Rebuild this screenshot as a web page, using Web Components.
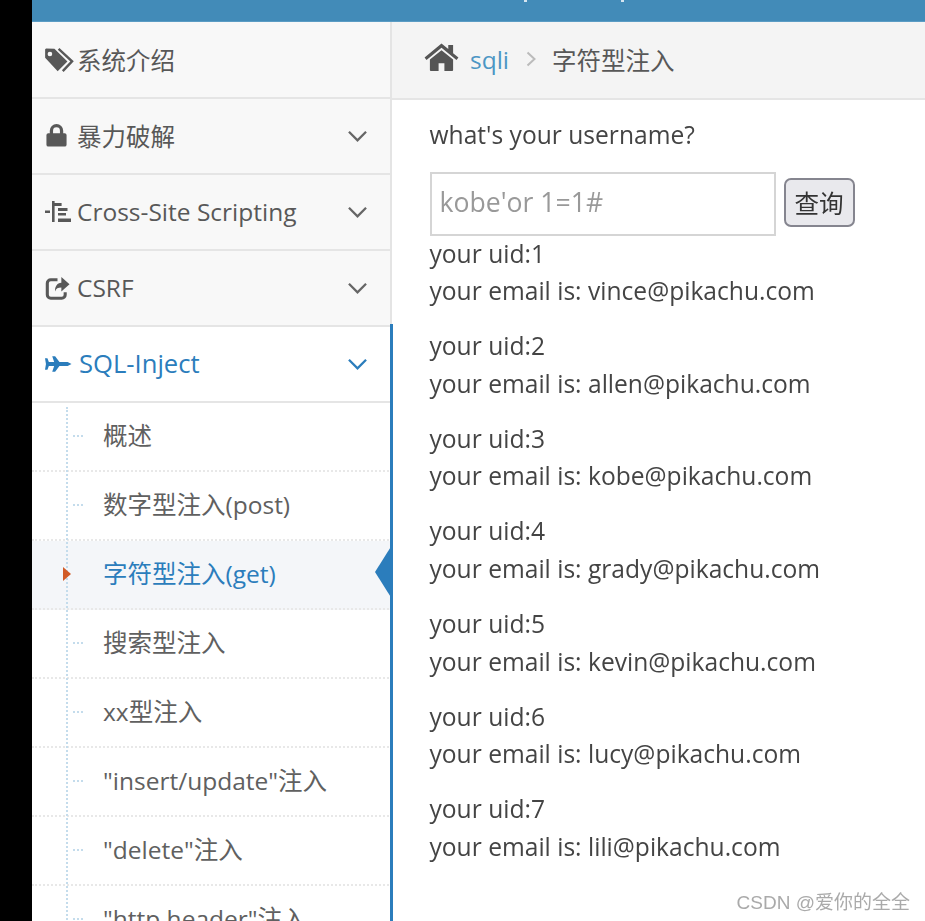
<!DOCTYPE html>
<html>
<head>
<meta charset="utf-8">
<style>
  html, body { margin: 0; height: 100%; overflow: hidden; background: #fff; }
  body { font-family: "Open Sans", "Noto Sans CJK SC", sans-serif; color: #555; }
</style>
</head>
<body>
<pk-app>
  <pk-topbar slot="top"></pk-topbar>
  <pk-sidebar slot="side">
    <pk-nav-item label="系统介绍" icon="tag" first></pk-nav-item>
    <pk-nav-item label="暴力破解" icon="lock" caret></pk-nav-item>
    <pk-nav-item label="Cross-Site Scripting" icon="xss" caret></pk-nav-item>
    <pk-nav-item label="CSRF" icon="share" caret></pk-nav-item>
    <pk-nav-item label="SQL-Inject" icon="plane" caret open></pk-nav-item>
    <pk-sub-list>
      <pk-sub-item>概述</pk-sub-item>
      <pk-sub-item>数字型注入(post)</pk-sub-item>
      <pk-sub-item active>字符型注入(get)</pk-sub-item>
      <pk-sub-item>搜索型注入</pk-sub-item>
      <pk-sub-item>xx型注入</pk-sub-item>
      <pk-sub-item>"insert/update"注入</pk-sub-item>
      <pk-sub-item>"delete"注入</pk-sub-item>
      <pk-sub-item>"http header"注入</pk-sub-item>
    </pk-sub-list>
  </pk-sidebar>
  <pk-breadcrumb slot="crumb"></pk-breadcrumb>
  <pk-query slot="main"></pk-query>
</pk-app>
<script>
// icons, filled with currentColor
const ICONS = {
  tag: '<svg viewBox="0 0 34 28" width="32" height="26" style="margin-left:-1px"><path fill="currentColor" d="M1 2.500 1 11.500 14.500 26 25 15.500 11 2 2 1.600ZM6.200 5a2.500 2.500 0 1 1-.1 5 2.500 2.500 0 0 1 .1-5Z"/><path fill="none" stroke="currentColor" stroke-width="2.600" d="M15.500 2 30 15.500 20 26"/></svg>',
  lock: '<svg viewBox="0 0 24 26" width="23" height="26"><path fill="currentColor" d="M5 10V7.500a7 7 0 0 1 14 0V10h1.500a2 2 0 0 1 2 2v10a2 2 0 0 1-2 2h-17a2 2 0 0 1-2-2V12a2 2 0 0 1 2-2ZM8.400 10h7.200V7.500a3.600 3.600 0 0 0-7.200 0Z"/></svg>',
  xss: '<svg viewBox="0 0 28 24" width="28" height="24"><path fill="currentColor" d="M0 10.500h5v2.500H0ZM7 1h2.600v21H7ZM9.600 3h7v3h-7ZM13 8h9.500v3H13ZM13 13h8v2.600h-8ZM13 18.500h13V22H13Z"/></svg>',
  share: '<svg viewBox="0 0 26 26" width="25" height="25"><path fill="none" stroke="currentColor" stroke-width="3.200" d="M21 17v2.500a3.600 3.600 0 0 1-3.600 3.600H6a3.600 3.600 0 0 1-3.600-3.600V7.500A3.600 3.600 0 0 1 6 3.900h7"/><path fill="currentColor" d="M17 1l8.500 7.500L17 16v-4c-3.500 0-5.500 1-6.500 4-.4-5 2-8.700 6.500-9Z"/></svg>',
  plane: '<svg viewBox="0 0 28 20" width="27" height="20"><path fill="currentColor" d="M0 4h2.500l1.500 4h5.500L7.500 2h3L15 8h8.500l4 2-4 2H15l-4.500 6h-3l2-6H4l-1.500 4H0l1-6Z"/></svg>',
  home: '<svg viewBox="0 0 36 30" width="35" height="29"><path fill="currentColor" d="M18 7.500 6 17v11a1 1 0 0 0 1 1h8v-8h6v8h8a1 1 0 0 0 1-1V17Z"/><path fill="currentColor" d="M18 .5.500 15l2 2.500L18 4.800l15.500 12.700 2-2.500L30 10.500V2h-5v4.300Z"/></svg>',
  down: '<svg viewBox="0 0 20 12" width="19" height="12"><path fill="none" stroke="currentColor" stroke-width="2.400" d="M1 1.500 10 10.500 19 1.500"/></svg>'
};

class PkApp extends HTMLElement {
  constructor() {
    super();
    this.attachShadow({ mode: 'open' }).innerHTML = `
      <style>
        :host { display: grid; grid-template-columns: 32px 360px 1fr; grid-template-rows: 22px 78px 1fr; height: 921px; overflow: hidden; filter: blur(.45px); }
        .black { background: #000; grid-row: 1 / 4; }
        ::slotted([slot=top]) { grid-column: 2 / 4; }
        ::slotted([slot=side]) { grid-row: 2 / 4; }
      </style>
      <div class="black"></div>
      <slot name="top"></slot>
      <slot name="side"></slot>
      <slot name="crumb"></slot>
      <slot name="main"></slot>`;
  }
}

class PkTopbar extends HTMLElement {
  constructor() {
    super();
    this.attachShadow({ mode: 'open' }).innerHTML = `
      <style>
        :host { display: block; background: #428bb8; border-bottom: 1px solid #5b9cc4; box-sizing: border-box; overflow: hidden; position: relative; }
        /* the tips of the cut off title */
        i { position: absolute; top: 0; width: 3px; height: 2px; background: #d5e5f0; }
      </style>
      <i style="left:492px"></i><i style="left:589px"></i>`;
  }
}

class PkSidebar extends HTMLElement {
  constructor() {
    super();
    this.attachShadow({ mode: 'open' }).innerHTML = `
      <style>
        :host { display: block; background: #f8f8f8; position: relative; z-index: 1; }
        .rail { position: absolute; right: 0; top: 0; bottom: 0; width: 2px; background: #e4e4e4; z-index: 2; }
        .rail.on { top: 302px; width: 3px; right: -1px; background: #2b7dbc; }
      </style>
      <slot></slot>
      <div class="rail"></div>
      <div class="rail on"></div>`;
  }
}

class PkNavItem extends HTMLElement {
  constructor() {
    super();
    const open = this.hasAttribute('open');
    const caret = this.hasAttribute('caret');
    this.attachShadow({ mode: 'open' }).innerHTML = `
      <style>
        :host { display: flex; align-items: center; height: ${this.hasAttribute('first') ? 77 : 76}px; box-sizing: border-box; border-bottom: 2px solid #e5e5e5; padding: 0 25px 0 13px; font-size: ${open ? 25.6 : 24.5}px; background: ${open ? '#fff' : '#f8f8f8'}; color: ${open ? '#2b7dbc' : '#585858'}; }
        .ic { width: ${open ? 34 : 32}px; display: flex; flex: none; }
        .lb { flex: 1; white-space: nowrap; margin-top: -1px; }
        .cr { display: flex; color: ${open ? '#2b7dbc' : '#666'}; }
      </style>
      <span class="ic">${ICONS[this.getAttribute('icon')]}</span>
      <span class="lb">${this.getAttribute('label')}</span>
      ${caret ? '<span class="cr">' + ICONS.down + '</span>' : ''}`;
  }
}

class PkSubList extends HTMLElement {
  constructor() {
    super();
    this.attachShadow({ mode: 'open' }).innerHTML = `
      <style>
        :host { display: block; position: relative; background: #fff; height: 520px; overflow: hidden; }
        .line { position: absolute; left: 34px; top: 4px; bottom: 0; border-left: 2px dotted #c4dcec; z-index: 1; }
      </style>
      <div class="line"></div>
      <slot></slot>`;
  }
}

class PkSubItem extends HTMLElement {
  constructor() {
    super();
    const active = this.hasAttribute('active');
    this.attachShadow({ mode: 'open' }).innerHTML = `
      <style>
        :host { display: flex; align-items: center; position: relative; height: 69px; box-sizing: border-box; border-bottom: 2px dotted #e8e8e8; padding: 0 0 5px 71px; font-size: 24.500px; white-space: nowrap; color: ${active ? '#2b7dbc' : '#606060'}; background: ${active ? '#f4f6f9' : '#fff'}; }
        .mark { position: absolute; left: 41px; top: 32px; width: 10px; border-top: 2px dotted #c4dcec; }
        .arrow { position: absolute; left: 31px; top: 26px; border-left: 8px solid #d15b27; border-top: 7px solid transparent; border-bottom: 7px solid transparent; z-index: 2; }
        .wedge { position: absolute; right: 0; top: 4px; width: 0; border-right: 17px solid #2b7dbc; border-top: 27px solid transparent; border-bottom: 27px solid transparent; z-index: 3; }
      </style>
      ${active ? '<span class="arrow"></span><span class="wedge"></span>' : '<span class="mark"></span>'}
      <slot></slot>`;
  }
}

class PkBreadcrumb extends HTMLElement {
  constructor() {
    super();
    this.attachShadow({ mode: 'open' }).innerHTML = `
      <style>
        :host { display: flex; align-items: center; background: #f4f4f4; border-bottom: 2px solid #e5e5e5; box-sizing: border-box; padding: 0 0 2px 32px; font-size: 24.500px; color: #585858; }
        .home { display: flex; margin-right: 11px; margin-top: -3px; color: #555; }
        .link { color: #4c96c4; }
        .sep { display: flex; margin: 0 16px 0 17px; color: #bbb; }
      </style>
      <span class="home">${ICONS.home}</span>
      <span class="link">sqli</span>
      <span class="sep"><svg viewBox="0 0 10 16" width="10" height="16"><path fill="none" stroke="currentColor" stroke-width="2" d="M1.500 1.500 8.500 8 1.500 14.500"/></svg></span>
      <span>字符型注入</span>`;
  }
}

class PkQuery extends HTMLElement {
  constructor() {
    super();
    const rows = [['1','vince'],['2','allen'],['3','kobe'],['4','grady'],['5','kevin'],['6','lucy'],['7','lili']];
    this.attachShadow({ mode: 'open' }).innerHTML = `
      <style>
        :host { display: block; position: relative; padding: 16px 0 0 37.500px; font-size: 24.600px; line-height: 37.500px; color: #444; overflow: hidden; }
        p { margin: 0; white-space: nowrap; }
        form { display: flex; align-items: flex-start; gap: 8px; margin: 18px 0 0; height: 63px; }
        .inp { box-sizing: border-box; width: 346px; height: 64px; border: 2px solid #d5d5d5; background: #fff; padding: 0 0 4px 8px; font: inherit; font-size: 26.600px; line-height: normal; color: #999; outline: none; }
        .inp::placeholder { color: #999; opacity: 1; }
        button { box-sizing: border-box; width: 71px; height: 49px; margin-top: 6px; border: 2px solid #85858f; border-radius: 7px; background: #e9e9ed; font: inherit; line-height: normal; color: #333; padding: 0; }
        .row { margin-bottom: 17.670px; }
        .wm { position: absolute; right: 15px; bottom: 5px; font: 19px "Liberation Sans", "Noto Sans CJK SC", sans-serif; line-height: 26px; color: #aaa; }
      </style>
      <p>what's your username?</p>
      <form onsubmit="return false">
        <input class="inp" placeholder="kobe'or 1=1#">
        <button>查询</button>
      </form>
      ${rows.map(r => `<div class="row"><p>your uid:${r[0]}</p><p>your email is: ${r[1]}@pikachu.com</p></div>`).join('')}
      <div class="wm">CSDN @爱你的全全</div>`;
  }
}

customElements.define('pk-app', PkApp);
customElements.define('pk-topbar', PkTopbar);
customElements.define('pk-sidebar', PkSidebar);
customElements.define('pk-nav-item', PkNavItem);
customElements.define('pk-sub-list', PkSubList);
customElements.define('pk-sub-item', PkSubItem);
customElements.define('pk-breadcrumb', PkBreadcrumb);
customElements.define('pk-query', PkQuery);
</script>
</body>
</html>
